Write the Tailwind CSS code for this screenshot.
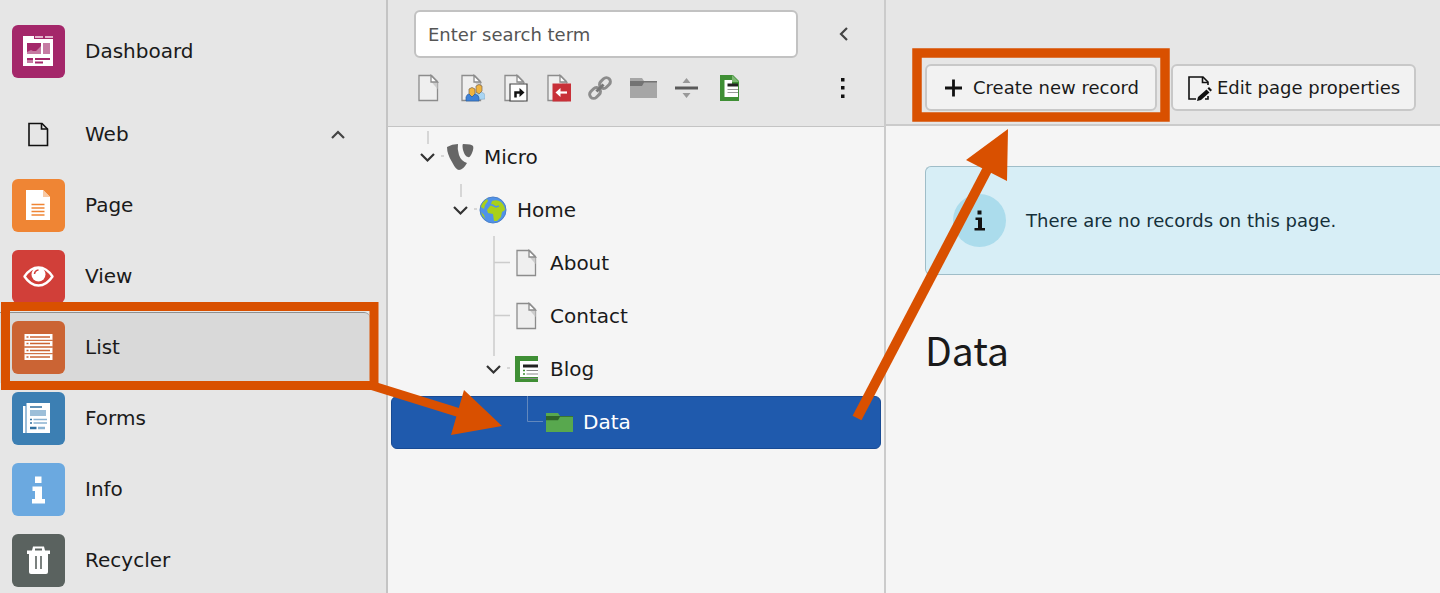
<!DOCTYPE html>
<html lang="en">
  <head>
    <meta charset="UTF-8" />
    <meta name="viewport" content="width=device-width, initial-scale=1.0" />
    <title>Data</title>
    <script src="https://cdn.jsdelivr.net/npm/@tailwindcss/browser@4"></script>
  </head>
  <body
    class="relative flex h-screen overflow-hidden bg-[#f5f5f5] text-[#1a1a1a] text-xl font-['DejaVu_Sans',sans-serif]"
  >
    <!-- shared icons -->
    <svg class="hidden">
      <symbol id="doc" viewBox="0 0 28 28">
        <path d="M5 1.500h12.500l6 6v19H5z" fill="#efefef" stroke="#8c8c8c" stroke-width="1.300" />
        <path d="M17.500 8l6 7V8z" fill="#ccc" />
        <path d="M17 1.500v6.500h6.500z" fill="#fff" stroke="#8c8c8c" stroke-width="1.300" />
      </symbol>
      <symbol id="chevron" viewBox="0 0 16 16">
        <path d="M2 5l6 6 6-6" fill="none" stroke="#444" stroke-width="2.200" />
      </symbol>
    </svg>

    <nav class="w-[388px] shrink-0 border-r-2 border-[#c4c4c4] bg-[#e6e6e6] pt-4 pr-4">
      <a href="#" class="flex h-[71px] items-center gap-5 pl-3">
        <svg class="size-[53px] shrink-0 rounded-md bg-[#a4276a]" viewBox="0 0 53 53">
          <path d="M11 11h11v3h19v27H11z" fill="#fff" />
          <path d="M23 11h8v2h-8zM33 11h8v2h-8z" fill="#e3b6cd" />
          <path d="M15 18h14v11H15zM31 18h7v11h-7zM15 33h6v5h-6z" fill="#c67ba3" />
          <path d="M15 18h14v3l-5 5h-3l-2-1-4 2z" fill="#a4276a" />
          <path d="M23 33h15v2H23zM23 36.500h8v2h-8zM15 33h6v2h-6z" fill="#a4276a" />
        </svg>
        <span class="pb-0.5">Dashboard</span>
      </a>
      <button class="mt-3 flex h-[71px] w-full items-center gap-5 pl-3 text-left">
        <svg class="size-[53px] shrink-0" viewBox="0 0 53 53" fill="none" stroke="#111" stroke-width="1.600">
          <path d="M17 15.500h13l5.500 5.500v16.500H17z" />
          <path d="M29.500 15.500v5.500h6" />
        </svg>
        <span class="grow pb-0.5">Web</span>
        <svg class="mr-6 size-4 rotate-180"><use href="#chevron" /></svg>
      </button>
      <a href="#" class="flex h-[71px] items-center gap-5 pl-3">
        <svg class="size-[53px] shrink-0 rounded-md bg-[#ef8534]" viewBox="0 0 53 53">
          <path d="M14 11h17l7 7v23H14z" fill="#fff" />
          <path d="M31 11l7 7h-7z" fill="#f8c9a4" />
          <path d="M19.500 25.500h13M19.500 29h13M19.500 32.500h13M19.500 36h13" stroke="#ef8534" stroke-width="1.500" />
        </svg>
        <span class="pb-0.5">Page</span>
      </a>
      <a href="#" class="flex h-[71px] items-center gap-5 pl-3">
        <svg class="size-[53px] shrink-0 rounded-md bg-[#d13f39]" viewBox="0 0 53 53">
          <path
            d="M12.500 26.500q6-9 14-9t14 9q-6 9-14 9t-14-9z"
            fill="none"
            stroke="#fff"
            stroke-width="2.400"
            stroke-linejoin="round"
          />
          <circle cx="26.500" cy="24.500" r="7" fill="#fff" />
          <path d="M22.500 24a4.500 4.500 0 0 1 4-4" fill="none" stroke="#d13f39" stroke-width="1.500" />
        </svg>
        <span class="pb-0.5">View</span>
      </a>
      <a
        href="#"
        class="flex h-[71px] items-center gap-5 rounded-r-md border-y border-t-[#8f8f8f] border-b-[#d9d9d9] bg-[#d9d9d9] pl-3"
      >
        <svg class="size-[53px] shrink-0 rounded-md bg-[#cb6434]" viewBox="0 0 53 53">
          <path d="M12.500 13h28v6h-28zM12.500 19.500h28v6h-28zM12.500 26.500h28v6h-28zM12.500 33h28v6h-28z" fill="#fff" />
          <path d="M12.500 19.300h28M12.500 26h28M12.500 32.700h28" stroke="#cb6434" />
          <path d="M18 16h20M18 22.500h20M18 29.500h20M18 36h20" stroke="#cb6434" stroke-width="1.600" />
          <path d="M14.500 16h2M14.500 22.500h2M14.500 29.500h2M14.500 36h2" stroke="#cb6434" stroke-width="1.600" />
        </svg>
        <span class="pb-0.5">List</span>
      </a>
      <a href="#" class="flex h-[71px] items-center gap-5 pl-3">
        <svg class="size-[53px] shrink-0 rounded-md bg-[#3c7fb3]" viewBox="0 0 53 53">
          <path d="M11 14h2.500v27H11zM14.500 11H38v30H14.500z" fill="#fff" />
          <path d="M18 18h16v6H18z" fill="#9dbfd9" />
          <path d="M18 15h12M18 35.500h6.500M18 36.500h6.500M18 27.500h2M18 31h2" stroke="#2f6f9f" stroke-width="1.600" />
          <path d="M21.500 27.500H35M21.500 31H35M26 35.500h7M26 36.500h7" stroke="#8ab2d1" stroke-width="1.400" />
        </svg>
        <span class="pb-0.5">Forms</span>
      </a>
      <a href="#" class="flex h-[71px] items-center gap-5 pl-3">
        <svg class="size-[53px] shrink-0 rounded-md bg-[#6ba9e0]" viewBox="0 0 53 53">
          <path d="M23 13.500h6.500v6.500H23zM20.500 23.500h9.500V36h3v4.500H20V36h3v-8h-2.500z" fill="#fff" />
        </svg>
        <span class="pb-0.5">Info</span>
      </a>
      <a href="#" class="flex h-[71px] items-center gap-5 pl-3">
        <svg class="size-[53px] shrink-0 rounded-md bg-[#5a625f]" viewBox="0 0 53 53">
          <path d="M15 16.500h5l1-4h11l1 4h5v3.500H15z" fill="#fff" />
          <path d="M23 14.500h7v2h-7z" fill="#5a625f" />
          <path d="M17 20h19v18q0 2-2 2H19q-2 0-2-2z" fill="#fff" />
          <path d="M24 22v13M29 22v13" stroke="#5a625f" stroke-width="1.600" />
        </svg>
        <span class="pb-0.5">Recycler</span>
      </a>
    </nav>

    <aside class="w-[498px] shrink-0 border-r-2 border-[#cbcbcb]">
      <div class="h-[127px] border-b border-[#c4c4c4] bg-[#e6e6e6] pt-2.5 pl-[26px] pr-[30px]">
        <div class="flex items-center justify-between">
          <input
            type="text"
            aria-label="Search"
            placeholder="Enter search term"
            class="h-12 w-[384px] rounded-md border-2 border-[#c2c2c2] bg-white px-3 text-lg placeholder:text-[#555]"
          />
          <button aria-label="Collapse" class="p-0.5">
            <svg class="size-4 rotate-90"><use href="#chevron" /></svg>
          </button>
        </div>
        <div class="mt-4 flex items-center justify-between">
          <div class="flex gap-[15px]">
            <button aria-label="Page"><svg class="size-7"><use href="#doc" /></svg></button>
            <button aria-label="Backend user section">
              <svg class="size-7" viewBox="0 0 28 28">
                <use href="#doc" />
                <path d="M17 26v-5q0-3 5-3 6 0 6 4v3z" fill="#a9d5f3" stroke="#7c9fb8" stroke-width=".5" />
                <path d="M19 12q3-3 6 0v5l-3 3-3-2z" fill="#f0b440" stroke="#765" stroke-width=".7" />
                <path d="M12 15q3-3 6 0v5l-3 3-3-3z" fill="#f0b440" stroke="#765" stroke-width=".7" />
                <path d="M9 27v-4q1-3 3-3l3 3 3-3q4 1 4 4v3z" fill="#3f82d8" stroke="#2c5f9e" stroke-width=".7" />
              </svg>
            </button>
            <button aria-label="Shortcut">
              <svg class="size-7" viewBox="0 0 28 28">
                <use href="#doc" />
                <path d="M10 10h17v17H10z" fill="#fff" stroke="#444" stroke-width="1.200" />
                <path d="M15.500 23.500v-5H20" fill="none" stroke="#111" stroke-width="2.500" />
                <path d="M19.500 14l5 4.500-5 4.500z" fill="#111" />
              </svg>
            </button>
            <button aria-label="Mount point">
              <svg class="size-7" viewBox="0 0 28 28">
                <use href="#doc" />
                <path d="M9.500 9.500H28v18H9.500z" fill="#c83038" />
                <path d="M16 18.500h8" stroke="#fff" stroke-width="2.200" />
                <path d="M17.500 14v9l-5-4.500z" fill="#fff" />
              </svg>
            </button>
            <button aria-label="Link">
              <svg class="size-7" viewBox="0 0 28 28" fill="none" stroke-width="3">
                <g transform="rotate(-45 14 14)">
                  <rect x="1" y="10" width="12" height="8" rx="4" stroke="#8c8c8c" />
                  <rect x="15" y="10" width="12" height="8" rx="4" stroke="#8c8c8c" />
                  <path d="M9 14h10" stroke="#777" />
                </g>
              </svg>
            </button>
            <button aria-label="Folder">
              <svg class="size-7" viewBox="0 0 28 28">
                <path d="M1 4h12l2 3h13v17H1z" fill="#a6a6a6" />
                <path d="M1 7h27v1.500H15l-2 3.500H1z" fill="#737373" />
              </svg>
            </button>
            <button aria-label="Divider">
              <svg class="size-7" viewBox="0 0 28 28">
                <path d="M3 12.500h23v3H3z" fill="#5a5a5a" />
                <path d="M14.500 4l4 5h-8zM14.500 24l4-5h-8z" fill="#999" />
              </svg>
            </button>
            <button aria-label="Blog">
              <svg class="size-7" viewBox="0 0 28 28">
                <path d="M5 1h13l6 6v20H5z" fill="#3f8f35" />
                <path d="M17 1l7 7h-7z" fill="#7db874" />
                <path d="M9.500 6H17v4h6v13H9.500z" fill="#fff" />
                <path d="M12.500 9.500H23v3H12.500z" fill="#222" />
                <path d="M12.500 15.500H23M12.500 18.500H23" stroke="#999" />
              </svg>
            </button>
          </div>
          <button aria-label="More">
            <svg class="h-7 w-[22px]" viewBox="0 0 22 28">
              <path d="M9 4h3.500v3.500H9zM9 12h3.500v3.500H9zM9 20.500h3.500V24H9z" fill="#111" />
            </svg>
          </button>
        </div>
      </div>

      <ul class="px-[3px] pt-1 leading-7">
        <li class="flex h-[53px] items-center pb-0.5 pl-5">
          <svg class="h-[53px] w-[33px]" viewBox="0 0 33 53" fill="none">
            <path d="M17 1v13M30 26h3" stroke="#ccc" stroke-width="1.500" />
            <path d="M10 24l6.500 6.500L23 24" stroke="#333" stroke-width="2.200" />
          </svg>
          <svg class="mr-2.5 ml-0.5 size-7" viewBox="0 0 28 28" fill="#666">
            <path d="M1 4q5-3 11-3-1 5 1 11t8 8q-4 7-8 7-3 0-7-8-5-8-5-15z" />
            <path d="M17 1q9 0 10 2 1 2-1 7t-4 4q-3 0-5-7-1-5 0-6z" />
          </svg>
          Micro
        </li>
        <li class="flex h-[53px] items-center pb-0.5 pl-[53px]">
          <svg class="h-[53px] w-[33px]" viewBox="0 0 33 53" fill="none">
            <path d="M17 1v13M30 26h3" stroke="#ccc" stroke-width="1.500" />
            <path d="M10 24l6.500 6.500L23 24" stroke="#333" stroke-width="2.200" />
          </svg>
          <svg class="mr-2.5 ml-0.5 size-7" viewBox="0 0 28 28">
            <circle cx="14" cy="14" r="13" fill="#5092e8" stroke="#4a80c8" />
            <path
              d="M13 5q5-2 9 1 4 4 4 8l-3 2-1 5-4 4-3 0-1-7-5-1-1-3 3-4 4-1-3-1z"
              fill="#a9d01a"
            />
            <path d="M13 9l4 2 3-1" stroke="#5092e8" stroke-width="1.500" fill="none" />
            <path d="M2 11q1-5 6-8l1 2-3 4-1 4zM2 16l3 3 1 4q-3-3-4-7z" fill="#a9d01a" />
          </svg>
          Home
        </li>
        <li class="flex h-[53px] items-center pb-0.5 pl-[86px]">
          <svg class="h-[53px] w-[33px]" viewBox="0 0 33 53" fill="none">
            <path d="M17 0v53M17 26.500H33" stroke="#ccc" stroke-width="1.500" />
          </svg>
          <svg class="mr-2.5 ml-0.5 size-7"><use href="#doc" /></svg>
          About
        </li>
        <li class="flex h-[53px] items-center pb-0.5 pl-[86px]">
          <svg class="h-[53px] w-[33px]" viewBox="0 0 33 53" fill="none">
            <path d="M17 0v53M17 26.500H33" stroke="#ccc" stroke-width="1.500" />
          </svg>
          <svg class="mr-2.5 ml-0.5 size-7"><use href="#doc" /></svg>
          Contact
        </li>
        <li class="flex h-[53px] items-center pb-0.5 pl-[86px]">
          <svg class="h-[53px] w-[33px]" viewBox="0 0 33 53" fill="none">
            <path d="M17 0v14M30 26h3" stroke="#ccc" stroke-width="1.500" />
            <path d="M10 24l6.500 6.500L23 24" stroke="#333" stroke-width="2.200" />
          </svg>
          <svg class="mr-2.5 ml-0.5 size-7" viewBox="0 0 28 28">
            <path d="M3 1h23v26H3z" fill="#3f8f35" />
            <path d="M8 6h18v16H8z" fill="#fff" />
            <path d="M11 9.500h15v3H11z" fill="#222" />
            <path d="M14.500 15.500H26M14.500 19H26M8 23.500h18" stroke="#888" />
            <path d="M11 15.500h2M11 19h2" stroke="#3f8f35" stroke-width="1.500" />
          </svg>
          Blog
        </li>
        <li class="flex h-[53px] items-center rounded-md border border-[#174a94] bg-[#1f5aad] pb-0.5 pl-[118px] text-white">
          <svg class="h-[53px] w-[33px]" viewBox="0 0 33 53" fill="none">
            <path d="M17.500 1v25.500H33" stroke="#6288bd" />
          </svg>
          <svg class="mr-2.5 ml-0.5 size-7" viewBox="0 0 28 28">
            <path d="M1 5h12l2 3h13v16H1z" fill="#58a84e" />
            <path d="M1 8h27v.8H15l-2 3.500H1z" fill="#2f6428" />
          </svg>
          Data
        </li>
      </ul>
    </aside>

    <main class="min-w-0 grow">
      <div class="flex h-[126px] items-end gap-3.5 border-b-2 border-[#cbcbcb] bg-[#e6e6e6] pb-[13px] pl-[39px] text-lg">
        <button class="flex h-[47px] items-center gap-1.5 rounded-md border-2 border-[#c8c8c8] bg-[#f2f2f2] pr-4 pl-3 whitespace-nowrap">
          <svg class="size-7" viewBox="0 0 28 28">
            <path d="M6 14h17M14.500 5.500v17" stroke="#111" stroke-width="2.800" />
          </svg>
          Create new record
        </button>
        <button class="flex h-[47px] items-center gap-1 rounded-md border-2 border-[#c8c8c8] bg-[#f2f2f2] pr-3.5 pl-3 whitespace-nowrap">
          <svg class="size-7" viewBox="0 0 28 28">
            <path d="M11 25H4V3h14l5 5v3" fill="none" stroke="#111" stroke-width="1.600" />
            <path d="M17.500 3v5.500H23M20 25h3v-3" fill="none" stroke="#111" stroke-width="1.600" />
            <path d="M12 27l1-4 8.500-7.500 3 3-8.500 7.500zM22.500 14.500l1.500-1.500 3 3-1.500 1.500z" fill="#111" />
          </svg>
          Edit page properties
        </button>
      </div>
      <div class="pt-10 pl-[39px]">
        <div class="flex h-[109px] items-center gap-5 rounded-l-md border-y border-l border-[#9fbdc8] bg-[#d7eef6] pl-[27px] text-lg text-[#15303a]">
          <svg class="size-[53px] shrink-0" viewBox="0 0 53 53">
            <circle cx="26.500" cy="26.500" r="26.500" fill="#abdcec" />
            <path d="M24.500 16.500h4v4h-4zM22.500 23.500h6.500v10.500h3v2.500H21.500V34h3.500v-8h-2.500z" fill="#111" />
          </svg>
          <p>There are no records on this page.</p>
        </div>
        <h1 class="mt-11 text-[39px] leading-[60px] font-['Noto_Sans_CJK_SC',sans-serif]">Data</h1>
      </div>
    </main>

    <!-- walkthrough marks over the screen -->
    <svg class="pointer-events-none absolute top-0 left-0 h-full w-full" fill="none" stroke="#d95000">
      <rect x="5.500" y="306.500" width="368.500" height="79" stroke-width="9" />
      <rect x="917" y="53" width="248" height="64" stroke-width="9.500" />
      <path d="M370 385l90 28" stroke-width="9" />
      <path d="M857 418L987 170" stroke-width="10" />
      <path d="M464 390l38 36-51 9zM1008 129l-42 31 41 21z" fill="#d95000" stroke="none" />
    </svg>
  </body>
</html>
